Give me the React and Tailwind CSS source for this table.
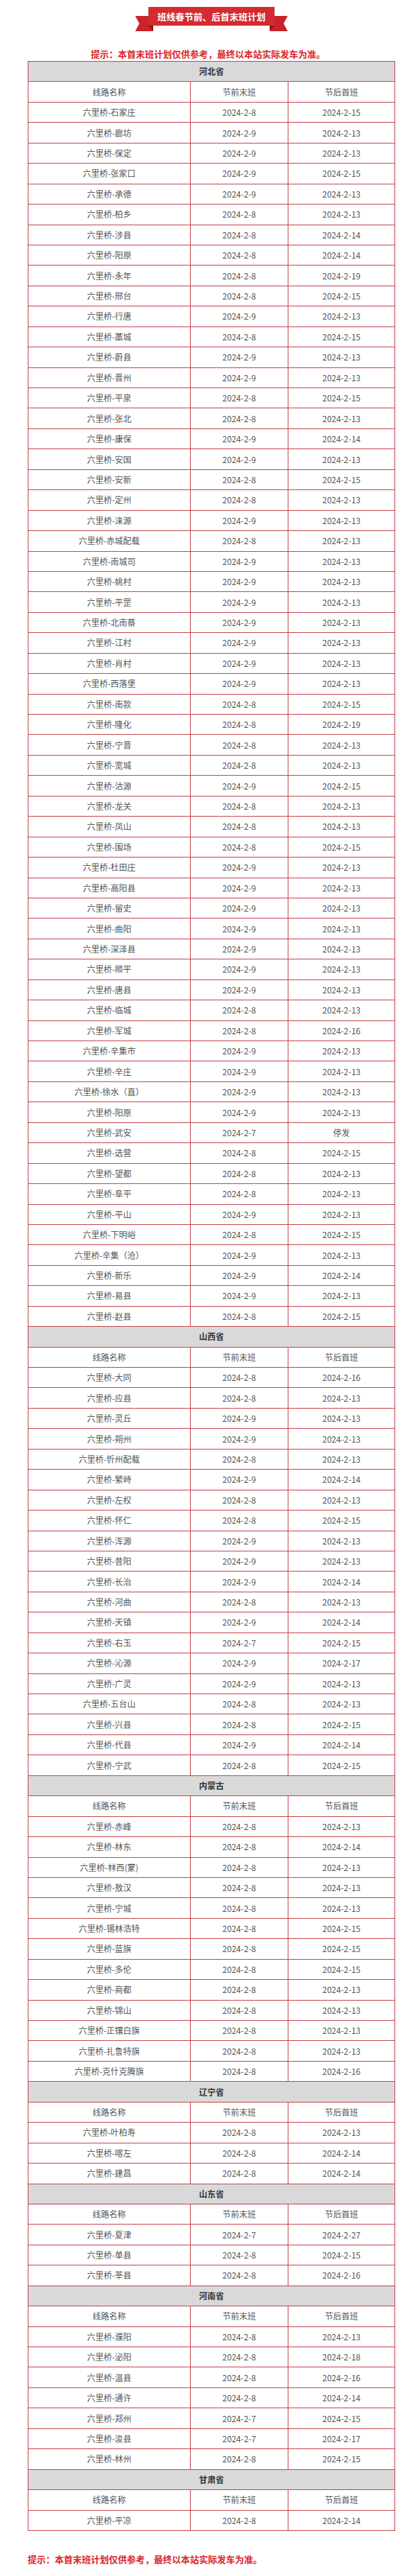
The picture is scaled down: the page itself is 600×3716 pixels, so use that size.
import React from 'react';

const sections = [
  {
    name: '河北省',
    rows: [
      ['石家庄', '8', '15'], ['廊坊', '9', '13'], ['保定', '9', '13'], ['张家口', '9', '15'],
      ['承德', '9', '13'], ['柏乡', '8', '13'], ['涉县', '8', '14'], ['阳原', '8', '14'],
      ['永年', '8', '19'], ['邢台', '8', '15'], ['行唐', '9', '13'], ['藁城', '8', '15'],
      ['蔚县', '9', '13'], ['晋州', '9', '13'], ['平泉', '8', '15'], ['张北', '8', '13'],
      ['康保', '9', '14'], ['安国', '9', '13'], ['安新', '8', '15'], ['定州', '8', '13'],
      ['涞源', '9', '13'], ['赤城配载', '8', '13'], ['南城司', '9', '13'], ['姚村', '9', '13'],
      ['平罡', '9', '13'], ['北南蔡', '9', '13'], ['江村', '9', '13'], ['肖村', '9', '13'],
      ['西落堡', '9', '13'], ['南款', '8', '15'], ['隆化', '8', '19'], ['宁晋', '8', '13'],
      ['宽城', '8', '13'], ['沽源', '9', '15'], ['龙关', '8', '13'], ['凤山', '8', '13'],
      ['围场', '8', '15'], ['杜田庄', '9', '13'], ['高阳县', '9', '13'], ['留史', '9', '13'],
      ['曲阳', '9', '13'], ['深泽县', '9', '13'], ['顺平', '9', '13'], ['唐县', '9', '13'],
      ['临城', '8', '13'], ['军城', '8', '16'], ['辛集市', '9', '13'], ['辛庄', '9', '13'],
      ['徐水（直）', '9', '13'], ['阳原', '9', '13'], ['武安', '7', null], ['选营', '8', '15'],
      ['望都', '8', '13'], ['阜平', '8', '13'], ['平山', '9', '13'], ['下明峪', '8', '15'],
      ['辛集（沧）', '9', '13'], ['新乐', '9', '14'], ['易县', '9', '13'], ['赵县', '8', '15'],
    ],
  },
  {
    name: '山西省',
    rows: [
      ['大同', '8', '16'], ['应县', '8', '13'], ['灵丘', '9', '13'], ['朔州', '9', '13'],
      ['忻州配载', '8', '13'], ['繁峙', '9', '14'], ['左权', '8', '13'], ['怀仁', '8', '15'],
      ['浑源', '9', '13'], ['昔阳', '9', '13'], ['长治', '9', '14'], ['河曲', '8', '13'],
      ['天镇', '9', '14'], ['右玉', '7', '15'], ['沁源', '9', '17'], ['广灵', '9', '13'],
      ['五台山', '8', '13'], ['兴县', '8', '15'], ['代县', '9', '14'], ['宁武', '8', '15'],
    ],
  },
  {
    name: '内蒙古',
    rows: [
      ['赤峰', '8', '13'], ['林东', '8', '14'], ['林西(蒙)', '8', '13'], ['敖汉', '8', '13'],
      ['宁城', '8', '13'], ['锡林浩特', '8', '15'], ['蓝旗', '8', '15'], ['多伦', '8', '15'],
      ['商都', '8', '13'], ['锦山', '8', '13'], ['正镶白旗', '8', '13'], ['扎鲁特旗', '8', '13'],
      ['克什克腾旗', '8', '16'],
    ],
  },
  {
    name: '辽宁省',
    rows: [['叶柏寿', '8', '13'], ['喀左', '8', '14'], ['建昌', '8', '14']],
  },
  {
    name: '山东省',
    rows: [['夏津', '7', '27'], ['单县', '8', '15'], ['莘县', '8', '16']],
  },
  {
    name: '河南省',
    rows: [
      ['濮阳', '8', '13'], ['泌阳', '8', '18'], ['温县', '8', '16'], ['通许', '8', '14'],
      ['郑州', '7', '15'], ['浚县', '7', '17'], ['林州', '8', '15'],
    ],
  },
  {
    name: '甘肃省',
    rows: [['平凉', '8', '14']],
  },
];

const font = { fontFamily: '"Noto Sans CJK SC", "Noto Sans", sans-serif' };

const Row = ({ cells }) => (
  <div className="grid grid-cols-[234px_141px_1fr] h-[29.45px] border-b border-[#c4414a]">
    {cells.map((c, i) => (
      <div
        key={i}
        className={`flex items-center justify-center text-[12px] text-[#555] ${i < 2 ? 'border-r border-[#c4414a]' : ''}`}
      >
        {c}
      </div>
    ))}
  </div>
);

const Banner = () => (
  <div className="relative ml-[195px] mt-[10px] w-[220px] h-[36px]">
    <svg className="absolute inset-0" width="220" height="36" viewBox="0 0 220 36">
      <polygon points="0,13 26,13 26,35 0,35 6,24" fill="#c8242a" />
      <polygon points="194,13 220,13 214,24 220,35 194,35" fill="#c8242a" />
      <polygon points="19,27 26,27 26,34" fill="#8a1518" />
      <polygon points="201,27 194,27 194,34" fill="#8a1518" />
      <rect x="19" y="0" width="182" height="27" fill="#d42a30" />
    </svg>
    <div className="relative ml-[19px] w-[182px] h-[27px] flex items-center justify-center text-[13px] font-bold text-white">
      班线春节前、后首末班计划
    </div>
  </div>
);

const Note = ({ className }) => (
  <p className={`text-[13px] leading-[20px] font-bold text-[#d9232a] ${className}`}>
    提示：本首末班计划仅供参考，最终以本站实际发车为准。
  </p>
);

export default function App() {
  return (
    <div className="w-[600px] bg-white pb-[11px]" style={font}>
      <Banner />
      <Note className="mt-[22px] text-center" />

      <div className="mx-[40px] w-[530px] border-l border-r border-t border-[#c4414a]">
        {sections.map((s) => (
          <div key={s.name}>
            <div className="h-[29.45px] flex items-center justify-center bg-[#d9d9d9] border-b border-[#c4414a] text-[12px] font-bold text-[#333]">
              {s.name}
            </div>
            <Row cells={['线路名称', '节前末班', '节后首班']} />
            {s.rows.map(([dest, last, first], i) => (
              <Row
                key={i}
                cells={[
                  `六里桥-${dest}`,
                  `2024-2-${last}`,
                  first ? `2024-2-${first}` : '停发',
                ]}
              />
            ))}
          </div>
        ))}
      </div>

      <Note className="mt-[31px] ml-[40px]" />
    </div>
  );
}
